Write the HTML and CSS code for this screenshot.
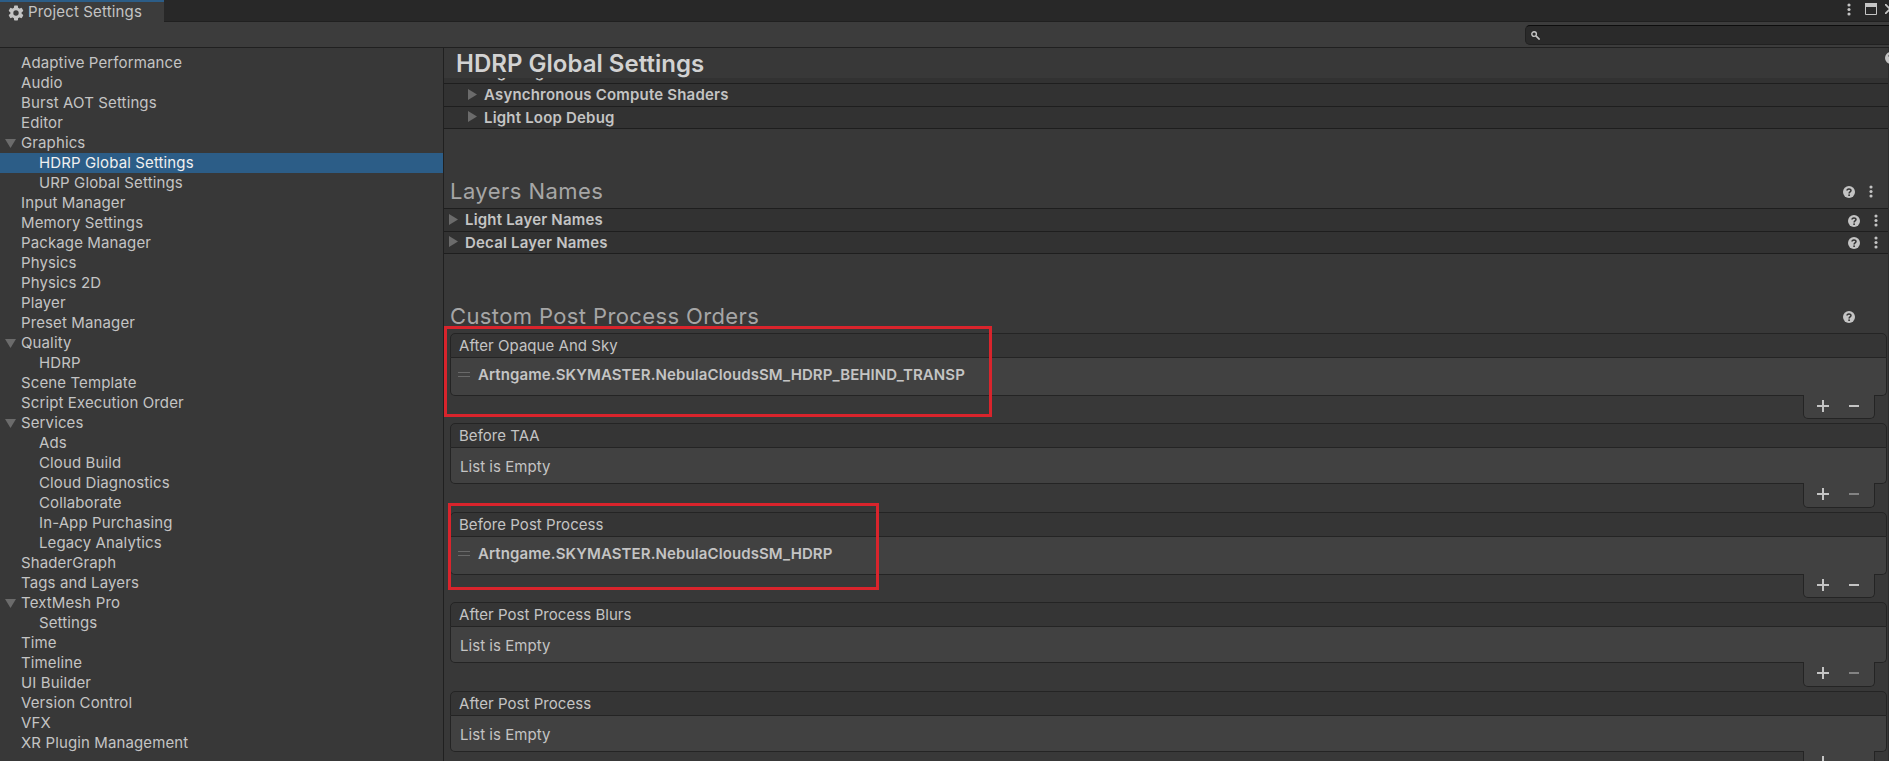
FILE: index.html
```html
<!DOCTYPE html>
<html lang="en">
<head>
<meta charset="utf-8">
<title>Project Settings</title>
<link rel="stylesheet" href="styles.css">
</head>
<body>
<svg class="defs" width="0" height="0">
  <defs>
    <symbol id="help" viewBox="0 0 12 12"><circle cx="6" cy="6" r="6" fill="#c4c4c4"/><path d="M4 4.6C4 2.4 8 2.3 8 4.5C8 6 6.1 5.8 6.1 7.4" fill="none" stroke="#333" stroke-width="1.5"/><rect x="5.3" y="8.4" width="1.6" height="1.6" fill="#333"/></symbol>
    <symbol id="dots" viewBox="0 0 4 13"><g fill="#c4c4c4"><circle cx="2" cy="2" r="1.55"/><circle cx="2" cy="6.5" r="1.55"/><circle cx="2" cy="11" r="1.55"/></g></symbol>
    <symbol id="plus" viewBox="0 0 12 12"><path d="M6 0V12M0 6H12" stroke="#c4c4c4" stroke-width="2"/></symbol>
    <symbol id="minus" viewBox="0 0 10 2"><path d="M0 1H10" stroke="#c4c4c4" stroke-width="2"/></symbol>
    <symbol id="right" viewBox="0 0 9 11"><path d="M0 0L9 5.5L0 11Z" fill="#6b6b6b"/></symbol>
    <symbol id="down" viewBox="0 0 11 9"><path d="M0 0H11L5.5 9Z" fill="#6b6b6b"/></symbol>
  </defs>
</svg>
<div class="window">
  <header class="tabbar">
    <div class="tab">
      <svg class="gear" viewBox="-8 -8 16 16"><g fill="#c4c4c4"><rect x="-2" y="-7.5" width="4" height="15" rx=".8"/><rect x="-2" y="-7.5" width="4" height="15" rx=".8" transform="rotate(60)"/><rect x="-2" y="-7.5" width="4" height="15" rx=".8" transform="rotate(120)"/></g><circle r="4.2" fill="none" stroke="#c4c4c4" stroke-width="3"/><circle r="2.7" fill="#3c3c3c"/></svg>
      <span>Project Settings</span>
    </div>
    <div class="controls">
      <svg class="dots"><use href="#dots"/></svg>
      <svg class="maximize" viewBox="0 0 12 12"><path d="M.5 .5H11.5V11.5H.5Z" fill="none" stroke="#c4c4c4"/><path d="M0 0H12V4H0Z" fill="#c4c4c4"/></svg>
      <svg class="close" viewBox="0 0 10 10"><path d="M0 0L10 10M10 0L0 10" stroke="#c4c4c4" stroke-width="1.8"/></svg>
    </div>
  </header>
  <div class="toolbar">
    <div class="search"><svg viewBox="0 0 9 9"><circle cx="3.1" cy="3.1" r="2.3" fill="none" stroke="#c4c4c4" stroke-width="1.4"/><path d="M4.9 4.9L8.6 8.6" stroke="#c4c4c4" stroke-width="1.6"/></svg></div>
  </div>
  <div class="body">
    <nav class="sidebar">
      <div class="item">Adaptive Performance</div>
      <div class="item">Audio</div>
      <div class="item">Burst AOT Settings</div>
      <div class="item">Editor</div>
      <div class="item group"><svg class="down"><use href="#down"/></svg>Graphics</div>
      <div class="item child selected">HDRP Global Settings</div>
      <div class="item child">URP Global Settings</div>
      <div class="item">Input Manager</div>
      <div class="item">Memory Settings</div>
      <div class="item">Package Manager</div>
      <div class="item">Physics</div>
      <div class="item">Physics 2D</div>
      <div class="item">Player</div>
      <div class="item">Preset Manager</div>
      <div class="item group"><svg class="down"><use href="#down"/></svg>Quality</div>
      <div class="item child">HDRP</div>
      <div class="item">Scene Template</div>
      <div class="item">Script Execution Order</div>
      <div class="item group"><svg class="down"><use href="#down"/></svg>Services</div>
      <div class="item child">Ads</div>
      <div class="item child">Cloud Build</div>
      <div class="item child">Cloud Diagnostics</div>
      <div class="item child">Collaborate</div>
      <div class="item child">In-App Purchasing</div>
      <div class="item child">Legacy Analytics</div>
      <div class="item">ShaderGraph</div>
      <div class="item">Tags and Layers</div>
      <div class="item group"><svg class="down"><use href="#down"/></svg>TextMesh Pro</div>
      <div class="item child">Settings</div>
      <div class="item">Time</div>
      <div class="item">Timeline</div>
      <div class="item">UI Builder</div>
      <div class="item">Version Control</div>
      <div class="item">VFX</div>
      <div class="item">XR Plugin Management</div>
    </nav>
    <main class="main">
      <div class="title"><h1>HDRP Global Settings</h1><svg class="help"><use href="#help"/></svg></div>
      <div class="scroll">
        <div class="foldout nested clipped"><span>Lighting</span></div>
        <div class="foldout nested tall"><svg class="right"><use href="#right"/></svg><span>Asynchronous Compute Shaders</span></div>
        <div class="foldout nested"><svg class="right"><use href="#right"/></svg><span>Light Loop Debug</span></div>
        <div class="section layers"><h2>Layers Names</h2><svg class="help"><use href="#help"/></svg><svg class="dots"><use href="#dots"/></svg></div>
        <div class="foldout first tall"><svg class="right"><use href="#right"/></svg><span>Light Layer Names</span><svg class="help"><use href="#help"/></svg><svg class="dots"><use href="#dots"/></svg></div>
        <div class="foldout"><svg class="right"><use href="#right"/></svg><span>Decal Layer Names</span><svg class="help"><use href="#help"/></svg><svg class="dots"><use href="#dots"/></svg></div>
        <div class="section orders"><h2>Custom Post Process Orders</h2><svg class="help"><use href="#help"/></svg></div>

        <div class="list">
          <div class="list-head">After Opaque And Sky</div>
          <div class="list-body filled"><i class="handle"></i><b>Artngame.SKYMASTER.NebulaCloudsSM_HDRP_BEHIND_TRANSP</b></div>
          <div class="list-foot"><svg class="plus"><use href="#plus"/></svg><svg class="minus"><use href="#minus"/></svg></div>
        </div>
        <div class="list">
          <div class="list-head">Before TAA</div>
          <div class="list-body">List is Empty</div>
          <div class="list-foot"><svg class="plus"><use href="#plus"/></svg><svg class="minus off"><use href="#minus"/></svg></div>
        </div>
        <div class="list">
          <div class="list-head">Before Post Process</div>
          <div class="list-body filled"><i class="handle"></i><b>Artngame.SKYMASTER.NebulaCloudsSM_HDRP</b></div>
          <div class="list-foot"><svg class="plus"><use href="#plus"/></svg><svg class="minus"><use href="#minus"/></svg></div>
        </div>
        <div class="list">
          <div class="list-head">After Post Process Blurs</div>
          <div class="list-body">List is Empty</div>
          <div class="list-foot"><svg class="plus"><use href="#plus"/></svg><svg class="minus off"><use href="#minus"/></svg></div>
        </div>
        <div class="list">
          <div class="list-head">After Post Process</div>
          <div class="list-body">List is Empty</div>
          <div class="list-foot"><svg class="plus"><use href="#plus"/></svg><svg class="minus off"><use href="#minus"/></svg></div>
        </div>
      </div>
    </main>
  </div>
  <div class="mark mark-sky"></div>
  <div class="mark mark-post"></div>
</div>
</body>
</html>
```
FILE: styles.css
```css
* { box-sizing: border-box; }
body {
  margin: 0;
  background: #383838;
  color: #c4c4c4;
  font: 15px/20px Inter, "Liberation Sans", sans-serif;
  letter-spacing: .12px;
  overflow: hidden;
}
h1, h2 { margin: 0; }
svg { display: block; flex: none; }
.defs { position: absolute; }
.window { position: relative; display: flex; flex-direction: column; height: 761px; overflow: hidden; }

.tabbar { display: flex; justify-content: space-between; height: 22px; background: #282828; border-bottom: 1px solid #202020; flex: none; }
.tab { display: flex; align-items: center; gap: 4px; width: 164px; height: 22px; padding: 2px 0 0 8px; background: #3c3c3c; border-top: 2px solid #2c5d87; }
.tab span { padding-bottom: 2px; letter-spacing: .16px; }
.gear { width: 16px; height: 16px; }
.controls { display: flex; align-items: center; height: 18px; margin-right: -6px; }
.dots { width: 4px; height: 13px; }
.maximize { width: 12px; height: 12px; margin: 0 8px 0 14px; }
.close { width: 10px; height: 10px; }

.toolbar { display: flex; justify-content: flex-end; height: 26px; padding-top: 3px; background: #3c3c3c; border-bottom: 1px solid #202020; flex: none; }
.search { width: 370px; height: 20px; margin-right: -6px; padding: 5px; background: #2a2a2a; border: 1px solid #212121; border-top-color: #0d0d0d; border-radius: 5px; }
.search svg { width: 9px; height: 9px; }

.body { display: flex; flex: 1; min-height: 0; }
.sidebar { width: 444px; padding-top: 5px; border-right: 1px solid #202020; flex: none; }
.item { height: 20px; padding-left: 21px; white-space: nowrap; }
.group { display: flex; align-items: center; padding-left: 5px; }
.down { width: 11px; height: 9px; margin: 1px 5px 0 0; }
.child { padding-left: 39px; }
.selected { background: #2c5d87; color: #f0f0f0; }

.main { flex: 1; min-width: 0; display: flex; flex-direction: column; border-right: 1px solid #2d2d2d; }
.title { display: flex; justify-content: space-between; height: 30px; padding-left: 12px; flex: none; }
.title h1 { font-size: 24px; line-height: 32px; font-weight: 600; letter-spacing: .02px; color: #d2d2d2; }
.title .help { margin: 4px -9px 0 0; }
.help { width: 12px; height: 12px; }
.scroll { flex: 1; min-height: 0; overflow: hidden; }

.foldout { display: flex; height: 22px; padding: 0 10px 0 5px; background: #323232; border-bottom: 1px solid #1e1e1e; font-weight: 600; line-height: 21px; }
.foldout span { flex: 1; margin-left: 7px; letter-spacing: .19px; }
.foldout .right { width: 9px; height: 11px; margin-top: 4px; }
.foldout .help { margin: 5px 14px 0 0; }
.foldout .dots { margin-top: 4px; }
.tall { height: 23px; line-height: 22px; }
.tall .right { margin-top: 5px; }
.tall .help { margin-top: 6px; }
.tall .dots { margin-top: 5px; }
.nested { padding-left: 24px; }
.clipped { height: 6px; align-items: flex-end; overflow: hidden; }
.clipped span { margin-left: 16px; line-height: 20px; margin-bottom: 1px; }
.first { height: 24px; border-top: 1px solid #1e1e1e; }

.section { display: flex; padding-left: 6px; }
.section h2 { flex: 1; font-size: 22px; line-height: 27px; font-weight: 400; letter-spacing: .45px; color: #a6a6a6; }
.layers { height: 79px; padding-top: 49px; padding-right: 15px; }
.layers .help { margin: 8px 14px 0 0; }
.layers .dots { margin-top: 7px; }
.orders { height: 79px; padding: 49px 33px 0 6px; }
.orders h2 { letter-spacing: .38px; }
.orders .help { margin-top: 8px; }

.list { display: flex; flex-direction: column; padding: 0 1px 0 6px; margin-bottom: 4px; }
.list-head { height: 25px; padding: 0 8px; background: #353535; border: 1px solid #242424; border-radius: 5px 5px 0 0; line-height: 23px; letter-spacing: .04px; }
.list-body { height: 36px; padding: 9px 9px 0; background: #414141; border: 1px solid #242424; border-top: 0; border-radius: 0 0 5px 5px; letter-spacing: .04px; }
.filled { display: flex; height: 38px; padding: 7px 6px 0; }
.filled b { font-weight: 600; letter-spacing: .1px; }
.handle { width: 12px; height: 5px; margin: 7px 8px 0 1px; border: solid #696969; border-width: 1px 0; }
.list-foot { align-self: flex-end; display: flex; width: 72px; height: 25px; margin: -1px 12px 0 0; padding: 5px 0 0 13px; background: #414141; border: 1px solid #242424; border-top: 0; border-radius: 0 0 5px 5px; }
.filled + .list-foot { height: 24px; }
.plus { width: 12px; height: 12px; margin-right: 20px; }
.minus { width: 10px; height: 2px; margin-top: 5px; }
.off { opacity: .5; }

.mark { position: absolute; border: 3px solid #d9242c; }
.mark-sky { left: 444px; top: 326px; width: 548px; height: 91px; }
.mark-post { left: 448px; top: 503px; width: 431px; height: 87px; }
```
